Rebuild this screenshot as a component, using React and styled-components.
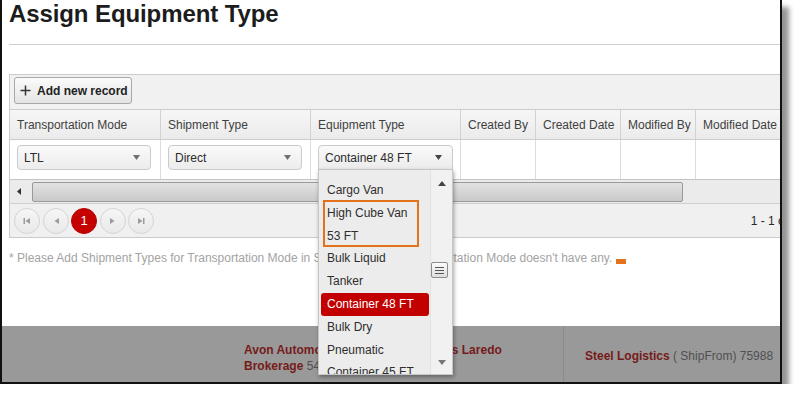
import React from 'react';
import styled, { createGlobalStyle } from 'styled-components';

const Global = createGlobalStyle`
  html, body { margin: 0; padding: 0; background: #fff; }
  body { font-family: "Liberation Sans", Arial, sans-serif; font-size: 12px; color: #333; }
  * { box-sizing: border-box; }
`;

const Frame = styled.div`
  position: relative;
  width: 782px;
  height: 384px;
  border-left: 2px solid #111;
  border-right: 2px solid #111;
  border-bottom: 2px solid #111;
  box-shadow: 7px 7px 5px rgba(0, 0, 0, 0.42);
  display: flex;
  flex-direction: column;
  overflow: hidden;
  background: #fff;
`;

const Title = styled.h1`
  margin: 0;
  padding-left: 7px;
  font-size: 24px;
  line-height: 28px;
  font-weight: bold;
  color: #1c1c1c;
  letter-spacing: -0.1px;
`;

const Rule = styled.div`
  margin: 16px 0 0 7px;
  border-top: 1px solid #cfcfcf;
`;

const Grid = styled.div`
  flex-shrink: 0;
  align-self: flex-start;
  width: 829px;
  margin: 29px 0 0 7px;
  border-left: 1px solid #ccc;
  border-top: 1px solid #ccc;
`;

const Toolbar = styled.div`
  height: 34px;
  padding: 2px 0 0 4px;
  background: #f1f1f1;
`;

const AddButton = styled.button`
  display: flex;
  align-items: center;
  gap: 6px;
  width: 118px;
  height: 27px;
  padding: 0 0 0 5px;
  border: 1px solid #a8a8a8;
  border-radius: 3px;
  background: linear-gradient(#fbfbfb, #e4e4e4);
  font-family: inherit;
  font-size: 12px;
  font-weight: bold;
  color: #222;
  cursor: pointer;
`;

const Row = styled.div`
  display: grid;
  grid-template-columns: 151px 150px 150px 75px 85px 75px 1fr;
  border-top: 1px solid #ccc;
  height: ${p => p.$h}px;
  background: ${p => (p.$head ? 'linear-gradient(#f6f6f6, #ebebeb)' : '#fff')};
`;

const HeadCell = styled.div`
  display: flex;
  align-items: center;
  padding-left: 7px;
  border-right: 1px solid #d2d2d2;
  color: #3f3f3f;
  white-space: nowrap;
  overflow: hidden;
`;

const Cell = styled.div`
  position: relative;
  padding: 5px 0 0 7px;
  border-right: 1px solid #dcdcdc;
`;

const Select = styled.div`
  position: relative;
  display: flex;
  align-items: center;
  justify-content: space-between;
  width: ${p => p.$w || 134}px;
  height: 25px;
  padding: 0 10px 0 6px;
  border: 1px solid #cbcbcb;
  border-radius: ${p => (p.$open ? '4px 4px 0 0' : '4px')};
  background: linear-gradient(#fafafa, #ececec);
  color: #2b2b2b;
  white-space: nowrap;
`;

const Popup = styled.div`
  position: absolute;
  left: -1px;
  top: 100%;
  z-index: 5;
  width: 135px;
  height: 206px;
  display: flex;
  border: 1px solid #c6c6c6;
  background: #ececec;
  box-shadow: 1px 2px 4px rgba(0, 0, 0, 0.35);
  white-space: normal;
`;

const List = styled.ul`
  flex: 1;
  min-width: 0;
  list-style: none;
  margin: 0;
  padding: 9px 1px 0 2px;
  overflow: hidden;
`;

const Item = styled.li`
  padding: 0 12px 0 6px;
  line-height: 22.8px;
  border-radius: 3px;
  color: ${p => (p.$active ? '#fff' : '#2e2e2e')};
  background: ${p => (p.$active ? '#c20000' : 'transparent')};
`;

const Callout = styled.div`
  position: absolute;
  left: 4px;
  top: 30px;
  width: 96px;
  height: 47px;
  border: 2px solid #e4721c;
  pointer-events: none;
`;

const PopScroll = styled.div`
  flex: none;
  width: 22px;
  display: flex;
  flex-direction: column;
  background: #f1f1f1;
  border-left: 1px solid #e2e2e2;
`;

const PopArrow = styled.div`
  height: ${p => p.$h}px;
  display: flex;
  align-items: center;
  justify-content: center;
`;

const PopTrack = styled.div`
  flex: 1;
`;

const PopThumb = styled.div`
  margin: 66px 0 0 0;
  width: 17px;
  height: 16px;
  border: 1px solid #8c8c8c;
  border-radius: 2px;
  background: linear-gradient(#fdfdfd, #dcdcdc);
  display: flex;
  flex-direction: column;
  align-items: center;
  justify-content: center;
  gap: 2px;
`;

const Grip = styled.span`
  display: block;
  width: 9px;
  height: 1px;
  background: #555;
`;

const ScrollRow = styled.div`
  display: flex;
  align-items: center;
  height: 24px;
  border-top: 1px solid #c4c4c4;
  background: #ebebeb;
`;

const ScrollBtn = styled.div`
  width: 22px;
  display: flex;
  justify-content: center;
  padding-right: 4px;
`;

const Thumb = styled.div`
  width: 651px;
  height: 20px;
  border: 1px solid #9a9a9a;
  border-radius: 2px;
  background: linear-gradient(#e2e2e2, #c9c9c9);
`;

const Pager = styled.div`
  display: flex;
  align-items: center;
  gap: 2.5px;
  height: 35px;
  padding: 0 8px 0 4px;
  border-top: 1px solid #cfcfcf;
  border-bottom: 1px solid #cacaca;
  background: #f0f0f0;
`;

const PageBtn = styled.div`
  width: 26px;
  height: 26px;
  border-radius: 50%;
  display: flex;
  align-items: center;
  justify-content: center;
  border: 1px solid ${p => (p.$active ? '#b80000' : '#d4d4d4')};
  background: ${p => (p.$active ? '#c40000' : 'linear-gradient(#f6f6f6, #e9e9e9)')};
  color: #fff;
  font-size: 13px;
`;

const PageInfo = styled.div`
  margin-left: auto;
  color: #2a2a2a;
  white-space: nowrap;
`;

const Note = styled.p`
  margin: 12px 0 0 7px;
  line-height: 16px;
  color: #a3a3a3;
  white-space: nowrap;
`;

const Marker = styled.span`
  display: inline-block;
  width: 10px;
  height: 5px;
  margin-left: 4px;
  vertical-align: -2px;
  background: #e4721c;
`;

const Footer = styled.footer`
  margin-top: auto;
  height: 56px;
  display: flex;
  background: #999;
`;

const FooterCell = styled.div`
  width: ${p => p.$w};
  flex: ${p => (p.$w ? 'none' : '1')};
  padding: ${p => p.$pad};
  border-right: ${p => (p.$w ? '1px solid #8b8b8b' : 'none')};
  line-height: 16px;
  white-space: ${p => (p.$w ? 'normal' : 'nowrap')};
`;

const FooterText = styled.div`
  width: 280px;
  color: #505050;
`;

const Company = styled.b`
  color: #761b1b;
`;

const Caret = ({ color = '#6f6f6f' }) => (
  <svg width="7" height="5" viewBox="0 0 7 5"><path d="M0 0H7L3.5 5Z" fill={color} /></svg>
);

const Tri = ({ dir, color = '#9a9a9a', bar }) => (
  <svg width="8" height="8" viewBox="0 0 8 8">
    {dir === 'left' ? <path d="M7 1V7L2.5 4Z" fill={color} /> : <path d="M1 1V7L5.5 4Z" fill={color} />}
    {bar && <rect x={dir === 'left' ? 0.5 : 6} y="1" width="1.5" height="6" fill={color} />}
  </svg>
);

const items = [
  'Cargo Van',
  'High Cube Van 53 FT',
  'Bulk Liquid Tanker',
  'Container 48 FT',
  'Bulk Dry Pneumatic',
  'Container 45 FT',
  'Flatbed',
];

export default function App() {
  return (
    <>
      <Global />
      <Frame>
        <Title>Assign Equipment Type</Title>
        <Rule />
        <Grid>
          <Toolbar>
            <AddButton>
              <svg width="11" height="11" viewBox="0 0 11 11">
                <path d="M5.5 0.5V10.5M0.5 5.5H10.5" stroke="#333" strokeWidth="1.5" />
              </svg>
              Add new record
            </AddButton>
          </Toolbar>
          <Row $head $h={30}>
            <HeadCell>Transportation Mode</HeadCell>
            <HeadCell>Shipment Type</HeadCell>
            <HeadCell>Equipment Type</HeadCell>
            <HeadCell>Created By</HeadCell>
            <HeadCell>Created Date</HeadCell>
            <HeadCell>Modified By</HeadCell>
            <HeadCell>Modified Date</HeadCell>
          </Row>
          <Row $h={40}>
            <Cell>
              <Select>LTL<Caret /></Select>
            </Cell>
            <Cell>
              <Select>Direct<Caret /></Select>
            </Cell>
            <Cell>
              <Select $open $w={135}>
                Container 48 FT<Caret color="#444" />
                <Popup>
                  <List>
                    {items.map(t => (
                      <Item key={t} $active={t === 'Container 48 FT'}>{t}</Item>
                    ))}
                  </List>
                  <PopScroll>
                    <PopArrow $h={26}>
                      <svg width="8" height="5" viewBox="0 0 8 5"><path d="M0 5H8L4 0Z" fill="#444" /></svg>
                    </PopArrow>
                    <PopTrack>
                      <PopThumb><Grip /><Grip /><Grip /></PopThumb>
                    </PopTrack>
                    <PopArrow $h={24}>
                      <svg width="8" height="5" viewBox="0 0 8 5"><path d="M0 0H8L4 5Z" fill="#777" /></svg>
                    </PopArrow>
                  </PopScroll>
                  <Callout />
                </Popup>
              </Select>
            </Cell>
            <Cell />
            <Cell />
            <Cell />
            <Cell />
          </Row>
          <ScrollRow>
            <ScrollBtn>
              <svg width="4" height="7" viewBox="0 0 4 7"><path d="M4 0V7L0 3.5Z" fill="#333" /></svg>
            </ScrollBtn>
            <Thumb />
          </ScrollRow>
          <Pager>
            <PageBtn><Tri dir="left" bar /></PageBtn>
            <PageBtn><Tri dir="left" /></PageBtn>
            <PageBtn $active>1</PageBtn>
            <PageBtn><Tri dir="right" /></PageBtn>
            <PageBtn><Tri dir="right" bar /></PageBtn>
            <PageInfo>1 - 1 of 1 items</PageInfo>
          </Pager>
        </Grid>
        <Note>
          * Please Add Shipment Types for Transportation Mode in Shipment Type if Transportation Mode doesn't have any.
          <Marker />
        </Note>
        <Footer>
          <FooterCell $w="562px" $pad="16px 0 0 242px">
            <FooterText>
              <Company>Avon Automotive de Mexico Holdings Laredo Brokerage</Company> 54092
            </FooterText>
          </FooterCell>
          <FooterCell $pad="22px 0 0 21px">
            <FooterText>
              <Company>Steel Logistics</Company> ( ShipFrom) 75988
            </FooterText>
          </FooterCell>
        </Footer>
      </Frame>
    </>
  );
}
